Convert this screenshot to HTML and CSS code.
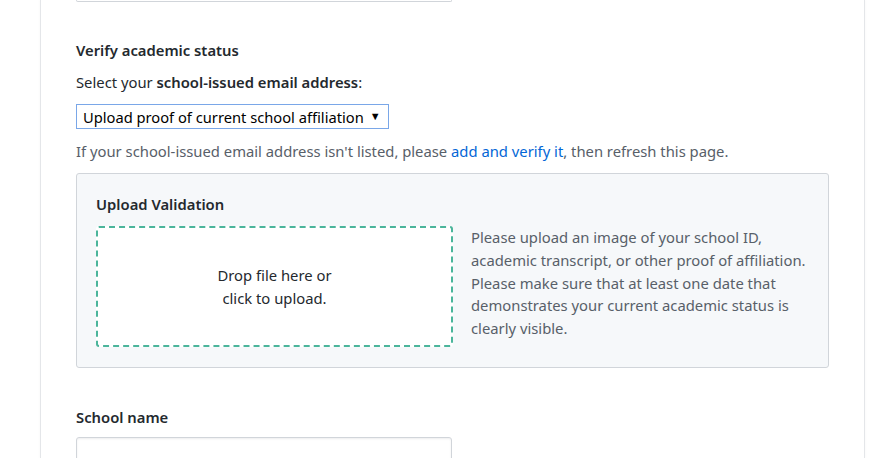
FILE: index.html
```html
<!DOCTYPE html>
<html lang="en">
<head>
<meta charset="utf-8">
<title>Verify academic status</title>
<link rel="stylesheet" href="styles.css">
</head>
<body>
<div class="page">
  <div class="card">
    <div class="field-tail"></div>

    <h3 class="label label-top">Verify academic status</h3>
    <p class="select-label">Select your <strong>school-issued email address</strong>:</p>
    <div class="select">
      <span class="select-text">Upload proof of current school affiliation</span>
      <span class="select-arrow">&#9660;</span>
    </div>
    <p class="note">If your school-issued email address isn't listed, please <a href="#">add and verify it</a>, then refresh this page.</p>

    <div class="upload-box">
      <h3 class="label">Upload Validation</h3>
      <div class="upload-row">
        <div class="dropzone">
          <span>Drop file here or<br>click to upload.</span>
        </div>
        <p class="upload-help">Please upload an image of your school ID, academic transcript, or other proof of affiliation. Please make sure that at least one date that demonstrates your current academic status is clearly visible.</p>
      </div>
    </div>

    <h3 class="label label-school">School name</h3>
    <div class="text-input"></div>
  </div>
</div>
</body>
</html>
```

FILE: styles.css
```css
html, body {
  margin: 0;
  padding: 0;
  background: #ffffff;
  height: 100%;
  overflow: hidden;
}

body {
  font-family: "Noto Sans", "Open Sans", sans-serif;
  font-size: 14.8px;
  line-height: 22px;
  color: #24292e;
}

.page {
  padding-left: 40px;
  height: 100%;
}

.card {
  width: 753px;
  height: 100%;
  padding: 0 35px;
  border-left: 1px solid #e4e6e9;
  border-right: 1px solid #e4e6e9;
  box-shadow: 0 0 3px rgba(0, 0, 0, 0.04);
}

.field-tail {
  width: 374px;
  height: 1px;
  border: 1px solid #d1d5da;
  border-top: none;
  border-radius: 0 0 3px 3px;
}

.label {
  margin: 0;
  font-size: 14.8px;
  font-weight: 600;
  line-height: 22px;
}

.label-top {
  margin-top: 37px;
}

.select-label {
  margin: 10px 0 0;
}

.select-label strong {
  font-weight: 600;
}

.select {
  margin-top: 11px;
  width: max-content;
  height: 23px;
  border: 1px solid #7aa7e8;
  display: flex;
  align-items: center;
  gap: 6px;
  padding: 0 7px 0 6px;
  color: #000000;
  font-size: 14.7px;
}

.select-arrow {
  font-size: 11px;
  line-height: 1;
  margin-top: -2px;
}

.note {
  margin: 11px 0 0;
  color: #586069;
}

.note a {
  color: #0366d6;
  text-decoration: none;
}

.upload-box {
  margin-top: 11px;
  width: 713px;
  padding: 19px 19px 20px;
  background: #f6f8fa;
  border: 1px solid #d1d5da;
  border-radius: 3px;
}

.upload-row {
  display: flex;
  margin-top: 11px;
  gap: 18px;
}

.dropzone {
  flex: none;
  width: 353px;
  height: 117px;
  border: 2px dashed #4bb59b;
  border-radius: 3px;
  background: #ffffff;
  display: flex;
  align-items: center;
  justify-content: center;
  text-align: center;
  line-height: 23px;
}

.upload-help {
  margin: 0;
  color: #586069;
  line-height: 22.75px;
  width: 345px;
}

.label-school {
  margin-top: 38px;
}

.text-input {
  margin-top: 9px;
  width: 374px;
  height: 34px;
  border: 1px solid #d1d5da;
  border-radius: 3px;
  box-shadow: inset 0 1px 2px rgba(27, 31, 35, 0.075);
}
```
